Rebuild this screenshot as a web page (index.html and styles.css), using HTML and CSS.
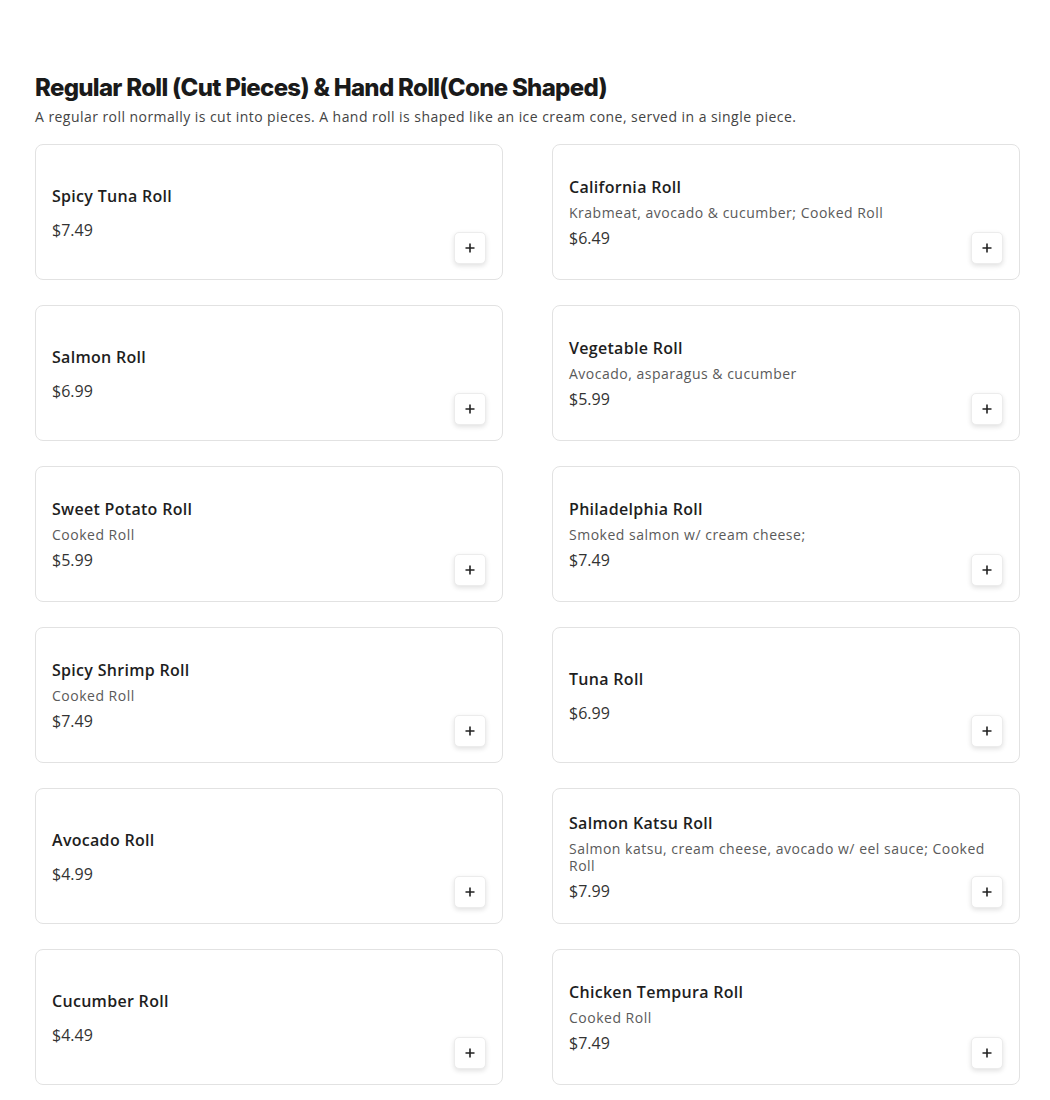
FILE: index.html
```html
<!DOCTYPE html>
<html lang="en">
<head>
<meta charset="utf-8">
<title>Menu</title>
<link rel="stylesheet" href="styles.css">
</head>
<body>
<section class="category">
  <h2 class="cat-title">Regular Roll (Cut Pieces) &amp; Hand Roll(Cone Shaped)</h2>
  <p class="cat-desc">A regular roll normally is cut into pieces. A hand roll is shaped like an ice cream cone, served in a single piece.</p>
  <div class="grid">
    <div class="card"><div class="info"><div class="name">Spicy Tuna Roll</div><div class="desc"></div><div class="price">$7.49</div></div><button class="add" aria-label="Add"><svg viewBox="0 0 12 12" width="12" height="12"><path d="M6 1.5v9M1.5 6h9" stroke="#222" stroke-width="1.6" fill="none"/></svg></button></div>
    <div class="card"><div class="info"><div class="name">California Roll</div><div class="desc">Krabmeat, avocado &amp; cucumber; Cooked Roll</div><div class="price">$6.49</div></div><button class="add" aria-label="Add"><svg viewBox="0 0 12 12" width="12" height="12"><path d="M6 1.5v9M1.5 6h9" stroke="#222" stroke-width="1.6" fill="none"/></svg></button></div>
    <div class="card"><div class="info"><div class="name">Salmon Roll</div><div class="desc"></div><div class="price">$6.99</div></div><button class="add" aria-label="Add"><svg viewBox="0 0 12 12" width="12" height="12"><path d="M6 1.5v9M1.5 6h9" stroke="#222" stroke-width="1.6" fill="none"/></svg></button></div>
    <div class="card"><div class="info"><div class="name">Vegetable Roll</div><div class="desc">Avocado, asparagus &amp; cucumber</div><div class="price">$5.99</div></div><button class="add" aria-label="Add"><svg viewBox="0 0 12 12" width="12" height="12"><path d="M6 1.5v9M1.5 6h9" stroke="#222" stroke-width="1.6" fill="none"/></svg></button></div>
    <div class="card"><div class="info"><div class="name">Sweet Potato Roll</div><div class="desc">Cooked Roll</div><div class="price">$5.99</div></div><button class="add" aria-label="Add"><svg viewBox="0 0 12 12" width="12" height="12"><path d="M6 1.5v9M1.5 6h9" stroke="#222" stroke-width="1.6" fill="none"/></svg></button></div>
    <div class="card"><div class="info"><div class="name">Philadelphia Roll</div><div class="desc">Smoked salmon w/ cream cheese;</div><div class="price">$7.49</div></div><button class="add" aria-label="Add"><svg viewBox="0 0 12 12" width="12" height="12"><path d="M6 1.5v9M1.5 6h9" stroke="#222" stroke-width="1.6" fill="none"/></svg></button></div>
    <div class="card"><div class="info"><div class="name">Spicy Shrimp Roll</div><div class="desc">Cooked Roll</div><div class="price">$7.49</div></div><button class="add" aria-label="Add"><svg viewBox="0 0 12 12" width="12" height="12"><path d="M6 1.5v9M1.5 6h9" stroke="#222" stroke-width="1.6" fill="none"/></svg></button></div>
    <div class="card"><div class="info"><div class="name">Tuna Roll</div><div class="desc"></div><div class="price">$6.99</div></div><button class="add" aria-label="Add"><svg viewBox="0 0 12 12" width="12" height="12"><path d="M6 1.5v9M1.5 6h9" stroke="#222" stroke-width="1.6" fill="none"/></svg></button></div>
    <div class="card"><div class="info"><div class="name">Avocado Roll</div><div class="desc"></div><div class="price">$4.99</div></div><button class="add" aria-label="Add"><svg viewBox="0 0 12 12" width="12" height="12"><path d="M6 1.5v9M1.5 6h9" stroke="#222" stroke-width="1.6" fill="none"/></svg></button></div>
    <div class="card"><div class="info"><div class="name">Salmon Katsu Roll</div><div class="desc">Salmon katsu, cream cheese, avocado w/ eel sauce; Cooked Roll</div><div class="price">$7.99</div></div><button class="add" aria-label="Add"><svg viewBox="0 0 12 12" width="12" height="12"><path d="M6 1.5v9M1.5 6h9" stroke="#222" stroke-width="1.6" fill="none"/></svg></button></div>
    <div class="card"><div class="info"><div class="name">Cucumber Roll</div><div class="desc"></div><div class="price">$4.49</div></div><button class="add" aria-label="Add"><svg viewBox="0 0 12 12" width="12" height="12"><path d="M6 1.5v9M1.5 6h9" stroke="#222" stroke-width="1.6" fill="none"/></svg></button></div>
    <div class="card"><div class="info"><div class="name">Chicken Tempura Roll</div><div class="desc">Cooked Roll</div><div class="price">$7.49</div></div><button class="add" aria-label="Add"><svg viewBox="0 0 12 12" width="12" height="12"><path d="M6 1.5v9M1.5 6h9" stroke="#222" stroke-width="1.6" fill="none"/></svg></button></div>
  </div>
</section>
</body>
</html>
```
FILE: styles.css
```css
html, body {
  margin: 0;
  padding: 0;
  background: #fff;
}
body {
  font-family: "Open Sans", "Liberation Sans", sans-serif;
  color: #191919;
}
.category {
  padding: 72px 30px 0 35px;
}
.cat-title {
  margin: 0;
  font-family: Inter, "Liberation Sans", sans-serif;
  font-weight: 800;
  font-size: 24px;
  line-height: 32px;
  letter-spacing: -0.7px;
  color: #1a1a1a;
}
.cat-desc {
  margin: 3px 0 0;
  font-size: 14px;
  line-height: 20px;
  letter-spacing: 0.45px;
  color: #444;
}
.grid {
  margin-top: 17px;
  display: grid;
  grid-template-columns: 1fr 1fr;
  column-gap: 49px;
  row-gap: 25px;
}
.card {
  box-sizing: border-box;
  height: 136px;
  border: 1px solid #e2e2e2;
  border-radius: 8px;
  padding: 16px 16px 15px 16px;
  display: grid;
  grid-template-columns: 1fr;
  grid-template-rows: 1fr;
}
.info {
  grid-area: 1 / 1;
  align-self: center;
  display: flex;
  flex-direction: column;
}
.name {
  font-size: 16px;
  line-height: 24px;
  font-weight: 600;
  letter-spacing: 0.3px;
  color: #1e1e1e;
}
.desc {
  margin: 5px 0 5px;
  font-size: 14px;
  line-height: 17px;
  letter-spacing: 0.5px;
  color: #5a5a5a;
}
.price {
  font-size: 16px;
  line-height: 24px;
  color: #333;
}
.add {
  grid-area: 1 / 1;
  justify-self: end;
  align-self: end;
  width: 32px;
  height: 32px;
  padding: 0;
  border: 1px solid #ececec;
  border-radius: 5px;
  background: #fff;
  box-shadow: 0 2px 5px rgba(0,0,0,0.12);
  display: flex;
  align-items: center;
  justify-content: center;
  cursor: pointer;
}
.add svg {
  display: block;
}
```
